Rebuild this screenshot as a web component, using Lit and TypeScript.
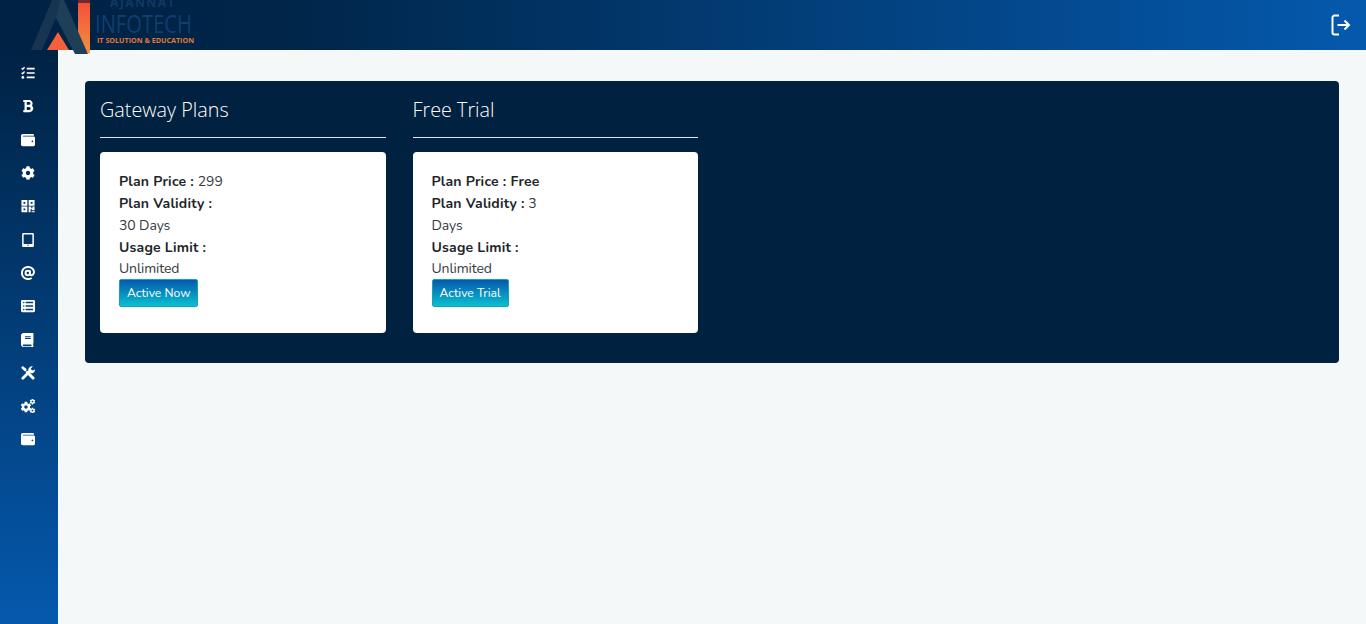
import { LitElement, html, css, svg } from "lit";
import { customElement } from "lit/decorators.js";

const COG = "M487.4 315.7l-42.6-24.6c4.3-23.2 4.3-47 0-70.2l42.6-24.6c4.9-2.8 7.1-8.6 5.5-14-11.1-35.6-30-67.8-54.7-94.6-3.8-4.1-10-5.1-14.8-2.3L380.8 110c-17.9-15.4-38.5-27.3-60.8-35.1V25.8c0-5.6-3.9-10.5-9.4-11.7-36.7-8.2-74.3-7.8-109.2 0-5.5 1.2-9.4 6.1-9.4 11.7V75c-22.2 7.9-42.8 19.8-60.8 35.1L88.7 85.5c-4.9-2.8-11-1.9-14.8 2.3-24.7 26.7-43.6 58.9-54.7 94.6-1.7 5.4.6 11.2 5.5 14L67.3 221c-4.3 23.2-4.3 47 0 70.2l-42.6 24.6c-4.9 2.8-7.1 8.6-5.5 14 11.1 35.6 30 67.8 54.7 94.6 3.8 4.1 10 5.1 14.8 2.3l42.6-24.6c17.9 15.4 38.5 27.3 60.8 35.1v49.2c0 5.6 3.9 10.5 9.4 11.7 36.7 8.2 74.3 7.8 109.2 0 5.5-1.2 9.4-6.1 9.4-11.7v-49.2c22.2-7.9 42.8-19.8 60.8-35.1l42.6 24.6c4.9 2.8 11 1.9 14.8-2.3 24.7-26.7 43.6-58.9 54.7-94.6 1.5-5.5-.7-11.3-5.6-14.1zM256 336c-44.1 0-80-35.9-80-80s35.9-80 80-80 80 35.9 80 80-35.9 80-80 80z";
const WALLET = "M461.2 128H80c-8.84 0-16-7.16-16-16s7.16-16 16-16h384c8.84 0 16-7.16 16-16 0-26.51-21.49-48-48-48H64C28.65 32 0 60.65 0 96v320c0 35.35 28.65 64 64 64h397.2c28.02 0 50.8-21.53 50.8-48V176c0-26.47-22.78-48-50.8-48zM416 340c-17.67 0-32-14.33-32-32s14.33-32 32-32 32 14.33 32 32-14.33 32-32 32z";
const BOLD = "M333.49 238a122 122 0 0 0 27-65.21C367.87 96.49 308 32 233.42 32H34a16 16 0 0 0-16 16v48a16 16 0 0 0 16 16h31.87v288H34a16 16 0 0 0-16 16v48a16 16 0 0 0 16 16h209.32c70.8 0 134.14-51.75 141-122.4 4.74-48.45-16.39-92.06-50.83-119.6zM145.66 112h87.76a48 48 0 0 1 0 96h-87.76zm87.76 288h-87.76V288h87.76a56 56 0 0 1 0 112z";

const icons = [
  svg`<g fill="none" stroke="#fff"><path stroke-width="62" d="M210 96h290M210 256h290M210 416h290"/><path stroke-width="50" d="M24 84l36 36 70-76M24 244l36 36 70-76"/></g><circle cx="68" cy="416" r="50" fill="#fff"/>`,
  svg`<g transform="translate(64 0)"><path fill="#fff" d="${BOLD}"/></g>`,
  svg`<path fill="#fff" d="${WALLET}"/>`,
  svg`<path fill="#fff" d="${COG}"/>`,
  svg`<path fill="#fff" fill-rule="evenodd" d="M16 32h216v216H16zM90 106v68h68v-68zM280 32h216v216H280zM354 106v68h68v-68zM16 272h216v216H16zM90 346v68h68v-68zM280 272h96v70h40v-70h80v130H390v-40h-40v126h-70zM390 430h40v58h-40zM446 430h50v58h-50z"/>`,
  svg`<path fill="#fff" fill-rule="evenodd" d="M88 0h336c26 0 48 22 48 48v416c0 26-22 48-48 48H88c-26 0-48-22-48-48V48C40 22 62 0 88 0zM96 56v344h320V56zM256 424a24 24 0 1 0 0 48 24 24 0 0 0 0-48z"/>`,
  svg`<g fill="none" stroke="#fff" stroke-width="72"><circle cx="248" cy="256" r="82"/><path d="M330 166v130c0 62 116 56 140-36 30-130-84-226-214-226C130 34 34 130 34 256s96 222 222 222c54 0 96-14 132-42"/></g>`,
  svg`<path fill="#fff" fill-rule="evenodd" d="M48 32h416c26 0 48 22 48 48v352c0 26-22 48-48 48H48c-26 0-48-22-48-48V80c0-26 22-48 48-48zM72 128a28 28 0 1 0 56 0 28 28 0 0 0-56 0zM72 256a28 28 0 1 0 56 0 28 28 0 0 0-56 0zM72 384a28 28 0 1 0 56 0 28 28 0 0 0-56 0zM168 104v48h272v-48zM168 232v48h272v-48zM168 360v48h272v-48z"/>`,
  svg`<path fill="#fff" fill-rule="evenodd" d="M96 0h336c13 0 24 11 24 24v336c0 8-4 15-9 19-4 15-4 59 0 73 6 6 9 11 9 20v16c0 13-11 24-24 24H96c-53 0-96-43-96-96V96C0 43 43 0 96 0zM144 120v32h212v-32zM144 184v32h212v-32zM96 416c-19 0-32 13-32 32s13 32 32 32h287c-2-17-2-47 0-64z"/>`,
  svg`<g stroke-linecap="round"><path stroke="#fff" stroke-width="100" d="M66 446L340 172"/><path fill="#fff" d="M504 120c12 66-20 136-86 146-52 8-106-10-136-52-32-52-22-116 22-158C340 24 392 4 436 10l-72 78 14 58 60 14z"/><path stroke="#fff" stroke-width="110" d="M440 440L230 230"/><path fill="#fff" d="M2 62L62 2l140 110-10 70-60 14z"/></g>`,
  svg`<g fill="#fff"><path transform="translate(-18 94) scale(.78)" d="${COG}"/><path transform="translate(312 -12) scale(.42)" d="${COG}"/><path transform="translate(312 316) scale(.42)" d="${COG}"/></g>`,
  svg`<path fill="#fff" d="${WALLET}"/>`,
];

@customElement("app-root")
export class AppRoot extends LitElement {
  static styles = css`
    :host {
      display: block;
      height: 624px;
      overflow: hidden;
      background: #f5f8f9;
      font-family: "Nunito", "Noto Sans", sans-serif;
    }
    .topbar {
      height: 50px;
      display: flex;
      align-items: center;
      justify-content: flex-end;
      padding-right: 15px;
      box-sizing: border-box;
      background: linear-gradient(90deg, #002244 0%, #002548 20%, #0559ad 100%);
    }
    .logout {
      width: 20px;
      height: 22px;
      display: block;
    }
    .logo {
      position: absolute;
      left: 0;
      top: 0;
      width: 200px;
      height: 56px;
    }
    .logo text {
      font-family: "Open Sans", sans-serif;
    }
    .body {
      display: flex;
      height: 574px;
    }
    .side {
      position: relative;
      z-index: 2;
      flex: 0 0 58px;
      box-sizing: border-box;
      padding-top: 6.5px;
      background: linear-gradient(180deg, #002244 0%, #0559ad 100%);
    }
    .side-item {
      height: 33.3px;
      display: flex;
      align-items: center;
      justify-content: center;
      padding-right: 3px;
      box-sizing: border-box;
    }
    .side-item svg {
      width: 14px;
      height: 14px;
      display: block;
    }
    main {
      flex: 1;
      padding: 31px 27px 0;
      min-width: 0;
    }
    .panel {
      background: #002140;
      border-radius: 4px;
      padding: 15px 16px 30px 15px;
      display: grid;
      grid-template-columns: repeat(4, 1fr);
      column-gap: 27px;
    }
    h2 {
      margin: 0;
      height: 26px;
      line-height: 27px;
      font-family: "Open Sans", sans-serif;
      font-weight: 300;
      font-size: 19.8px;
      color: #fff;
    }
    hr {
      border: 0;
      border-top: 1px solid #dfe6ee;
      margin: 15px 0 14px;
    }
    .card {
      background: #fff;
      border-radius: 4px;
      height: 181px;
      box-sizing: border-box;
      padding: 19.4px 19px 19px;
      font-size: 14px;
      line-height: 21.76px;
      color: #343a40;
    }
    .plain {
      letter-spacing: -0.1px;
    }
    b {
      font-weight: 700;
      letter-spacing: 0.2px;
      color: #212529;
    }
    .btn {
      display: block;
      width: fit-content;
      height: 28px;
      box-sizing: border-box;
      margin-top: -1.2px;
      padding: 0 7px;
      line-height: 26px;
      font-size: 12.2px;
      color: #fff;
      border: 1px solid #17a2b8;
      border-radius: 2px;
      background: linear-gradient(180deg, #0559ad 0%, #0ac0d0 100%);
    }
  `;

  render() {
    return html`
      <div class="topbar">
        <svg class="logout" viewBox="0 0 20 22" fill="none" stroke="#fff" stroke-width="2">
          <path d="M8 1.5H3.5a2 2 0 0 0-2 2v15a2 2 0 0 0 2 2H8" />
          <path d="M6.5 11H18M13.5 6.5L18 11l-4.5 4.5" />
        </svg>
      </div>
      <svg class="logo" viewBox="0 0 200 56">
        <defs>
          <linearGradient id="o" x1="0" y1="0" x2="0" y2="1">
            <stop offset="0" stop-color="#f4503a" />
            <stop offset="1" stop-color="#f0923c" />
          </linearGradient>
        </defs>
        <path d="M78 3h12v49l-1 2-11-12z" fill="url(#o)" />
        <rect x="78" y="0" width="12" height="3" fill="#6d2a35" />
        <path d="M58 32L69 50H47z" fill="#f4603a" />
        <path d="M52 0h12l24 54H75L56 18z" fill="#1d4058" />
        <path d="M52 0L31 50h11l14-32 4-18z" fill="#173450" />
        <text x="143" y="7" text-anchor="middle" font-size="12" font-weight="700" letter-spacing="1.5" fill="#0f3a66">AJANNAT</text>
        <text x="95" y="33" font-size="25" textLength="97" lengthAdjust="spacingAndGlyphs" fill="#0f3e70">INFOTECH</text>
        <text x="97" y="43" font-size="6.5" font-weight="700" textLength="97" lengthAdjust="spacingAndGlyphs" fill="#e0793a">IT SOLUTION &amp; EDUCATION</text>
      </svg>
      <div class="body">
        <nav class="side">
          ${icons.map((i) => html`<div class="side-item"><svg viewBox="0 0 512 512">${i}</svg></div>`)}
        </nav>
        <main>
          <div class="panel">
            <section>
              <h2>Gateway Plans</h2>
              <hr />
              <div class="card">
                <div><b>Plan Price :</b> 299</div>
                <div><b>Plan Validity :</b></div>
                <div class="plain">30 Days</div>
                <div><b>Usage Limit :</b></div>
                <div class="plain">Unlimited</div>
                <span class="btn">Active Now</span>
              </div>
            </section>
            <section>
              <h2>Free Trial</h2>
              <hr />
              <div class="card">
                <div><b>Plan Price : Free</b></div>
                <div><b>Plan Validity :</b> 3</div>
                <div class="plain">Days</div>
                <div><b>Usage Limit :</b></div>
                <div class="plain">Unlimited</div>
                <span class="btn">Active Trial</span>
              </div>
            </section>
          </div>
        </main>
      </div>
    `;
  }
}
